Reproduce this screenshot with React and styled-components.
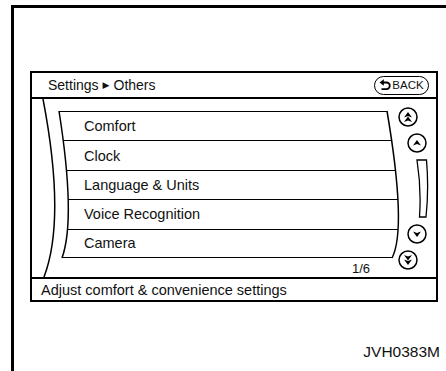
import React from 'react';
import styled, {createGlobalStyle} from 'styled-components';

const GlobalStyle = createGlobalStyle`
    html, body {
        margin: 0;
        padding: 0;
        background: #fff;
    }
    body {
        font-family: "Liberation Sans", Arial, sans-serif;
        color: #111;
    }
`;

const Frame = styled.div`
    margin: 5px 0 0 11px;
    height: 366px;
    box-sizing: border-box;
    border-top: 3px solid #000;
    border-left: 3px solid #000;
    display: flex;
    flex-direction: column;
`;

const Screen = styled.div`
    margin: 63px 0 0 16px;
    width: 408px;
    box-sizing: border-box;
    border: 2px solid #000;
    display: flex;
    flex-direction: column;
`;

const Header = styled.div`
    height: 24px;
    border-bottom: 2px solid #000;
    display: flex;
    align-items: center;
    justify-content: space-between;
    padding: 0 7px 0 16px;
`;

const Crumb = styled.span`
    font-size: 14px;
    display: flex;
    align-items: center;
    gap: 4px;
`;

const CrumbArrow = styled.span`
    font-size: 9px;
    font-family: "DejaVu Sans", sans-serif;
`;

const BackButton = styled.div`
    height: 19px;
    width: 55px;
    box-sizing: border-box;
    border: 1.5px solid #000;
    border-radius: 10px;
    display: flex;
    align-items: center;
    justify-content: center;
    gap: 1px;
    font-size: 11.5px;
`;

const Body = styled.div`
    position: relative;
    height: 178px;
    display: flex;
`;

const Curves = styled.svg`
    position: absolute;
    left: 0;
    top: 0;
    pointer-events: none;
`;

const Main = styled.div`
    width: 366px;
    padding: 12px 0 0 27px;
    box-sizing: border-box;
    display: flex;
    flex-direction: column;
`;

const List = styled.div`
    width: 339px;
    clip-path: path('M0 0 L328 0 Q348 118 333 147 L3 147 Q17 108 0 0 Z');
`;

const Item = styled.div`
    height: 29.4px;
    box-sizing: border-box;
    border-top: 1.5px solid #000;
    border-bottom: ${p => (p.$last ? '1.5px solid #000' : 'none')};
    display: flex;
    align-items: center;
    padding-left: 25px;
    font-size: 14.5px;
`;

const PageCount = styled.div`
    margin-top: 3px;
    padding-right: 28px;
    text-align: right;
    font-size: 13px;
`;

const ScrollColumn = styled.div`
    flex: 1;
    display: flex;
    flex-direction: column;
    gap: 6px;
    padding-top: 8px;
`;

const ScrollBtn = styled.svg`
    display: block;
    margin-left: ${p => p.$offset}px;
`;

const Status = styled.div`
    height: 21px;
    border-top: 2px solid #000;
    display: flex;
    align-items: center;
    padding-left: 9px;
    font-size: 14.5px;
`;

const Caption = styled.div`
    margin: 41px 6px 0 0;
    text-align: right;
    font-size: 15.5px;
`;

const items = ['Comfort', 'Clock', 'Language & Units', 'Voice Recognition', 'Camera'];

const Head = ({y, dir}) => {
    const d = dir === 'up'
        ? `M10 ${y - 3} L14 ${y + 2.5} L10 ${y + 1} L6 ${y + 2.5} Z`
        : `M10 ${y + 3} L14 ${y - 2.5} L10 ${y - 1} L6 ${y - 2.5} Z`;
    return <path d={d} fill="#000" />;
};

const RoundButton = ({offset, dir, double}) => (
    <ScrollBtn $offset={offset} width="20" height="20" viewBox="0 0 20 20">
        <circle cx="10" cy="10" r="9" fill="#fff" stroke="#000" strokeWidth="1.5" />
        {double ? (
            <>
                <Head y={dir === 'up' ? 8 : 7.5} dir={dir} />
                <Head y={dir === 'up' ? 12.5 : 12} dir={dir} />
            </>
        ) : (
            <Head y={10} dir={dir} />
        )}
    </ScrollBtn>
);

const BackIcon = () => (
    <svg width="12" height="12" viewBox="0 0 12 12">
        <path d="M4 3.5 H7.5 A3.3 3.3 0 0 1 7.5 10.1 H2.5" fill="none" stroke="#000" strokeWidth="1.8" />
        <path d="M0.5 3.5 L4.8 0.3 L4.8 6.7 Z" fill="#000" />
    </svg>
);

const App = () => {
    return (
        <>
            <GlobalStyle />
            <Frame>
                <Screen>
                    <Header>
                        <Crumb>
                            Settings <CrumbArrow>▶</CrumbArrow> Others
                        </Crumb>
                        <BackButton>
                            <BackIcon />
                            BACK
                        </BackButton>
                    </Header>
                    <Body>
                        <Curves width="404" height="178" viewBox="0 0 404 178">
                            <g fill="none" stroke="#000" strokeWidth="1.5">
                                <path d="M11 0 Q34 120 12 178" />
                                <path d="M27 12 Q44 120 30 159" />
                                <path d="M355 12 Q375 130 360 159" />
                            </g>
                        </Curves>
                        <Main>
                            <List>
                                {items.map((item, i) => (
                                    <Item key={item} $last={i === items.length - 1}>{item}</Item>
                                ))}
                            </List>
                            <PageCount>1/6</PageCount>
                        </Main>
                        <ScrollColumn>
                            <RoundButton offset={0} dir="up" double />
                            <RoundButton offset={9} dir="up" />
                            <ScrollBtn $offset={18} width="13" height="59" viewBox="0 0 13 59">
                                <path d="M1 1 L10.5 1 Q13 30 10 58 L3.5 58 Q5.5 30 1 1 Z" fill="none" stroke="#000" strokeWidth="1.3" />
                            </ScrollBtn>
                            <RoundButton offset={9} dir="down" />
                            <RoundButton offset={0} dir="down" double />
                        </ScrollColumn>
                    </Body>
                    <Status>Adjust comfort &amp; convenience settings</Status>
                </Screen>
                <Caption>JVH0383M</Caption>
            </Frame>
        </>
    );
};

export default App;
